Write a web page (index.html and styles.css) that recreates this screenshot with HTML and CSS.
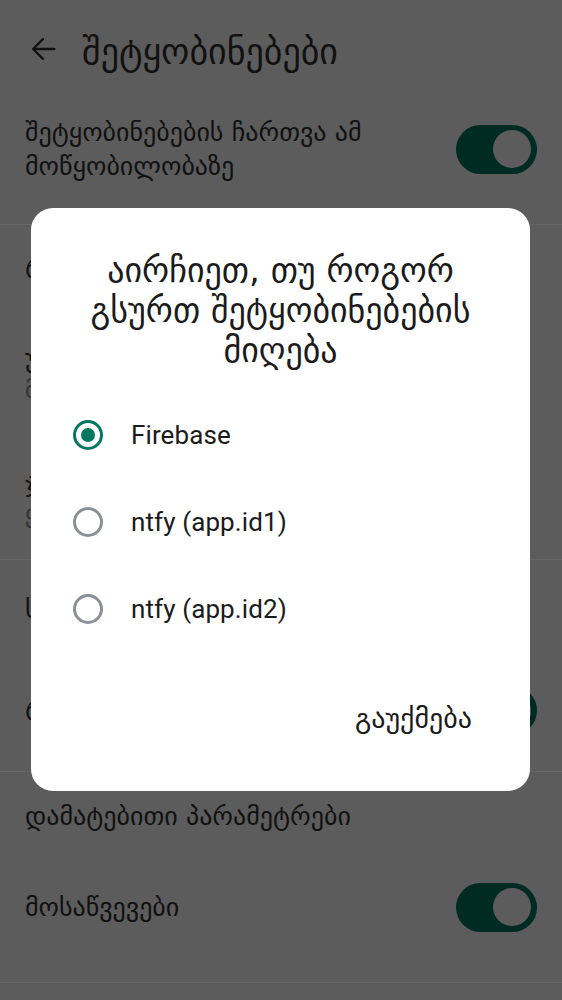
FILE: index.html
```html
<!DOCTYPE html>
<html lang="ka">
<head>
<meta charset="utf-8">
<title>შეტყობინებები</title>
<link rel="stylesheet" href="styles.css">
</head>
<body>
<div class="page">
  <header class="appbar">
    <svg class="back" width="34" height="34" viewBox="0 0 24 24" aria-hidden="true">
      <path d="M20 12H5M12 5l-7 7 7 7" fill="none" stroke="#111" stroke-width="1.6" stroke-linecap="round" stroke-linejoin="round"/>
    </svg>
    <h1 class="title ka">შეტყობინებები</h1>
  </header>

  <section class="row row-first">
    <div class="row-text ka">შეტყობინებების ჩართვა ამ მოწყობილობაზე</div>
    <div class="switch"><div class="thumb"></div></div>
  </section>

  <section class="group">
    <div class="row row-single"><div class="row-text ka">რეჟიმი</div></div>
    <div class="row row-double">
      <div class="row-text ka">უწყვეტი კავშირი</div>
      <div class="row-sub ka">მიწოდების მეთოდი</div>
    </div>
    <div class="row row-double">
      <div class="row-text ka">ჯგუფები</div>
      <div class="row-sub ka">ყველა არხი</div>
    </div>
  </section>

  <section class="group">
    <div class="row row-head"><div class="row-text ka">სისტემა</div></div>
    <div class="row row-toggle">
      <div class="row-text ka">რეკლამა</div>
      <div class="switch"><div class="thumb"></div></div>
    </div>
  </section>

  <section class="group">
    <div class="row row-extra"><div class="row-text ka">დამატებითი პარამეტრები</div></div>
    <div class="row row-toggle2">
      <div class="row-text ka">მოსაწვევები</div>
      <div class="switch"><div class="thumb"></div></div>
    </div>
  </section>
</div>

<div class="dialog" role="dialog">
  <h2 class="dialog-title ka">აირჩიეთ, თუ როგორ გსურთ შეტყობინებების მიღება</h2>
  <ul class="options">
    <li class="option"><span class="radio checked"></span><span class="label">Firebase</span></li>
    <li class="option"><span class="radio"></span><span class="label">ntfy (app.id1)</span></li>
    <li class="option"><span class="radio"></span><span class="label">ntfy (app.id2)</span></li>
  </ul>
  <div class="actions"><button class="btn ka">გაუქმება</button></div>
</div>
</body>
</html>
```

FILE: styles.css
```css
* { box-sizing: border-box; }

html, body {
  margin: 0;
  padding: 0;
  background: #5c5c5c;
}

body {
  width: 562px;
  height: 1000px;
  overflow: hidden;
  position: relative;
  font-family: Roboto, "DejaVu Sans", sans-serif;
  color: #111;
}

.ka {
  font-family: "DejaVu Sans", Roboto, sans-serif;
}

.page {
  display: flex;
  flex-direction: column;
}

.appbar {
  height: 90px;
  display: flex;
  align-items: center;
  padding-left: 26px;
  gap: 22px;
  padding-top: 12px;
}

.back { display: block; margin-top: -4px; }

.title {
  margin: 0;
  font-size: 36px;
  font-weight: 400;
  color: #111;
}

.row {
  display: flex;
  align-items: center;
  justify-content: space-between;
  padding: 0 25px;
}

.row-text {
  font-size: 26px;
  line-height: 34px;
  color: #111;
}

.row-sub {
  font-size: 24px;
  line-height: 30px;
  color: #333;
}

.row-first {
  height: 135px;
  border-bottom: 1px solid #666;
  padding-bottom: 16px;
}

.row-first .row-text { width: 400px; }

.row-single { height: 86px; }
.row-double {
  height: 124px;
  flex-direction: column;
  align-items: flex-start;
  justify-content: center;
}
.group { border-bottom: 1px solid #666; }
.row-single { padding-top: 2px; }

.row-head { height: 90px; padding-top: 8px; }
.row-toggle { height: 121px; }
.row-extra { height: 86px; padding-top: 2px; }
.row-toggle2 { height: 124px; padding-bottom: 26px; }

.switch {
  width: 81px;
  height: 49px;
  border-radius: 25px;
  background: #002b23;
  display: flex;
  align-items: center;
  justify-content: flex-end;
  padding-right: 6px;
  flex: none;
}

.thumb {
  width: 38px;
  height: 38px;
  border-radius: 50%;
  background: #5c5c5c;
}

.dialog {
  position: absolute;
  left: 31px;
  top: 208px;
  width: 499px;
  height: 583px;
  background: #fff;
  border-radius: 22px;
  padding: 42px 46px 49px 42px;
  display: flex;
  flex-direction: column;
}

.dialog-title {
  margin: 0;
  text-align: center;
  font-size: 34px;
  line-height: 40px;
  font-weight: 400;
  color: #1b1b1b;
  padding: 0 4px 0 8px;
}

.options {
  list-style: none;
  margin: 21px 0 0;
  padding: 0;
}

.option {
  height: 87px;
  display: flex;
  align-items: center;
  gap: 28px;
}

.radio {
  width: 30px;
  height: 30px;
  border-radius: 50%;
  border: 3px solid #8a9099;
  display: flex;
  align-items: center;
  justify-content: center;
  flex: none;
}

.radio.checked { border-color: #00785f; }
.radio.checked::after {
  content: "";
  width: 14px;
  height: 14px;
  border-radius: 50%;
  background: #00785f;
}

.label {
  font-size: 26px;
  color: #1b1b1b;
  letter-spacing: 0.1px;
}

.actions {
  margin-top: auto;
  display: flex;
  justify-content: flex-end;
}

.btn {
  font-size: 28px;
  color: #1b1b1b;
  background: none;
  border: 0;
  height: 48px;
  padding: 0 12px;
}
```
